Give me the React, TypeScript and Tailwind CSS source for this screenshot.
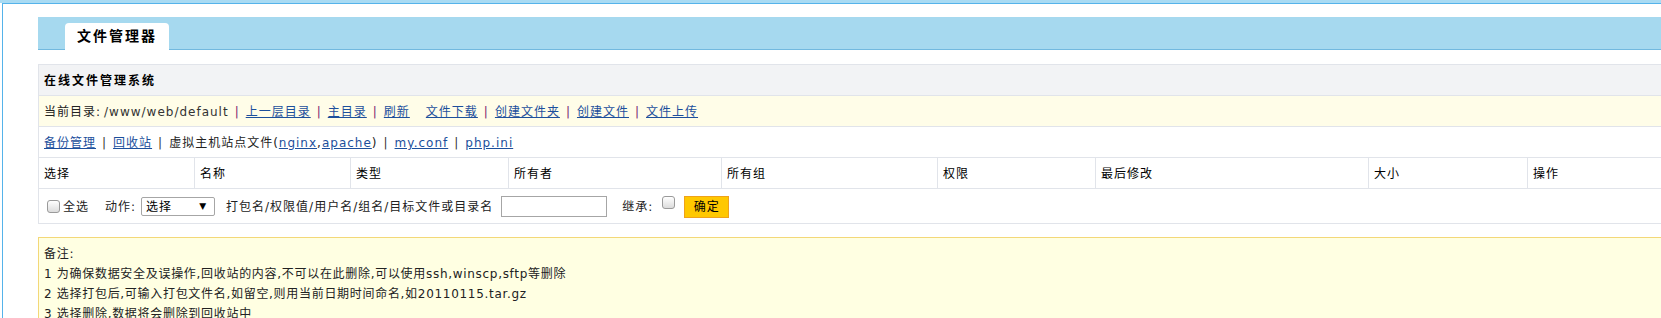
import React from 'react';

const cols = [
  { label: '选择', w: 'w-[156px]' },
  { label: '名称', w: 'w-[156px]' },
  { label: '类型', w: 'w-[158px]' },
  { label: '所有者', w: 'w-[213px]' },
  { label: '所有组', w: 'w-[216px]' },
  { label: '权限', w: 'w-[158px]' },
  { label: '最后修改', w: 'w-[273px]' },
  { label: '大小', w: 'w-[159px]' },
];

const Sep = ({ dark = false }: { dark?: boolean }) => (
  <span className={`mx-[6px] ${dark ? 'text-[#333]' : 'text-[#7a1a6e]'}`}>|</span>
);

const Link = ({ children }: { children: React.ReactNode }) => (
  <a href="#" className="text-[#1c4f9c] underline">
    {children}
  </a>
);

const Box = () => (
  <span className="inline-block w-[13px] h-[13px] rounded-[3px] border border-[#9a9a9a] bg-gradient-to-b from-white to-[#dcdcdc]" />
);

export default function App() {
  return (
    <div
      className="w-[1661px] h-[318px] overflow-hidden bg-white text-[12px] text-[#222] tracking-[1px]"
      style={{ fontFamily: '"DejaVu Sans", "Noto Sans CJK SC", sans-serif' }}
    >
      <div className="h-[3px] bg-[#a9dbf3]" />
      <div className="ml-[2px] border-l border-t border-[#55b3ea] pl-[35px] pt-[13px] w-[1700px]">
        {/* tab band */}
        <div className="h-[33px] bg-[#a6d9ef] border-b border-[#72b9df] flex items-end pl-[27px]">
          <div className="w-[104px] h-[27px] -mb-px bg-white rounded-t-[4px] flex items-center justify-center text-[14px] font-bold tracking-[2px] text-black">
            文件管理器
          </div>
        </div>

        {/* panel */}
        <div className="mt-[14px] w-[1650px] border-l border-t border-[#e1e4ea]">
          <div className="h-[31px] bg-[#f2f3f5] border-b border-[#e1e4ea] flex items-center pl-[5px] pt-[2px] font-bold tracking-[2px] text-black">
            在线文件管理系统
          </div>

          <div className="h-[31px] bg-[#fffde8] border-b border-[#e1e4ea] flex items-center pl-[5px] pt-[2px]">
            <span>当前目录:</span>
            <span className="ml-[3px] text-[#333]">/www/web/default</span>
            <Sep />
            <Link>上一层目录</Link>
            <Sep />
            <Link>主目录</Link>
            <Sep />
            <Link>刷新</Link>
            <span className="w-[16px]" />
            <Link>文件下载</Link>
            <Sep />
            <Link>创建文件夹</Link>
            <Sep />
            <Link>创建文件</Link>
            <Sep />
            <Link>文件上传</Link>
          </div>

          <div className="h-[31px] border-b border-[#e1e4ea] flex items-center pl-[5px] pt-[2px]">
            <Link>备份管理</Link>
            <Sep dark />
            <Link>回收站</Link>
            <Sep dark />
            <span>虚拟主机站点文件(</span>
            <Link>nginx</Link>
            <span>,</span>
            <Link>apache</Link>
            <span>)</span>
            <Sep dark />
            <Link>my.conf</Link>
            <Sep dark />
            <Link>php.ini</Link>
          </div>

          <div className="h-[31px] border-b border-[#e1e4ea] flex text-black">
            {cols.map((c) => (
              <div key={c.label} className={`${c.w} shrink-0 border-r border-[#e1e4ea] flex items-center pl-[5px] pt-[2px]`}>
                {c.label}
              </div>
            ))}
            <div className="flex-1 flex items-center pl-[5px] pt-[2px]">操作</div>
          </div>

          <div className="h-[35px] border-b border-[#e1e4ea] flex items-center pl-[8px] pt-[1px]">
            <Box />
            <span className="ml-[3px]">全选</span>
            <span className="ml-[16px]">动作:</span>
            <div className="relative ml-[5px] w-[74px] h-[19px]">
              <select className="appearance-none w-full h-full border border-[#a6a6a6] rounded-[2px] bg-white pl-[4px] text-[12px] tracking-[1px] text-black outline-none">
                <option>选择</option>
              </select>
              <span className="absolute right-[8px] top-[3px] text-[9px] text-black pointer-events-none">▼</span>
            </div>
            <span className="ml-[11px]">打包名/权限值/用户名/组名/目标文件或目录名</span>
            <input className="ml-[8px] w-[106px] h-[21px] border border-[#a6a6a6] bg-white outline-none" />
            <span className="ml-[15px]">继承:</span>
            <span className="ml-[9px] mb-[4px]">
              <Box />
            </span>
            <button className="ml-[9px] w-[45px] h-[22px] bg-[#ffc800] border border-[#efa21a] text-black text-[12px] tracking-[1px]">
              确定
            </button>
          </div>
        </div>

        {/* notes */}
        <div className="mt-[13px] w-[1650px] border border-[#f3d878] bg-[#ffffe2] pl-[5px] pt-[6px] pb-[10px] leading-[20px] tracking-[0.7px] text-[#222]">
          <div>备注:</div>
          <div>1 为确保数据安全及误操作,回收站的内容,不可以在此删除,可以使用ssh,winscp,sftp等删除</div>
          <div>2 选择打包后,可输入打包文件名,如留空,则用当前日期时间命名,如20110115.tar.gz</div>
          <div>3 选择删除,数据将会删除到回收站中</div>
        </div>
      </div>
    </div>
  );
}
